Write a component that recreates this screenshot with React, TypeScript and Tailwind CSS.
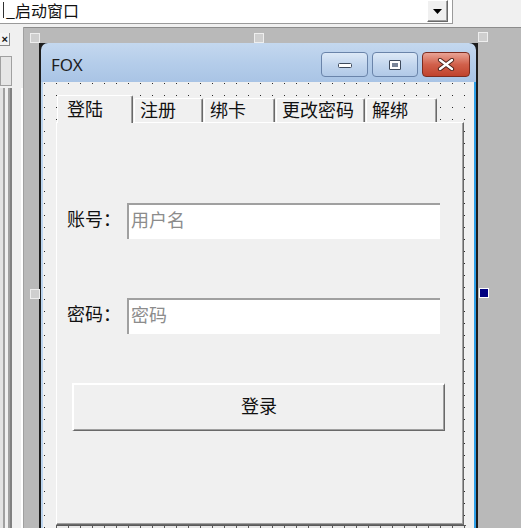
import React from "react";

const tabs = [
  { label: "注册", w: "w-[69px]" },
  { label: "绑卡", w: "w-[71px]" },
  { label: "更改密码", w: "w-[89px]" },
  { label: "解绑", w: "w-[71px]" },
];

function TopBar() {
  return (
    <div className="h-[27px] flex shrink-0 bg-[#f0f0f0]">
      <div className="w-[453px] h-[24px] bg-white border-r border-b border-[#9a9a9a] flex items-start">
        <div className="h-[23px] pt-[1px] flex items-start">
          <span className="ml-[3px] mt-[1px] w-px h-[16px] bg-[#303030]" />
          <span className="ml-[2px] text-[16px] leading-[18px] text-[#111]">_启动窗口</span>
        </div>
        <div className="ml-auto mr-[4px] w-[21px] h-[22px] bg-[#f0f0f0] border-t border-l border-t-white border-l-white border-r border-b border-r-[#696969] border-b-[#696969] shadow-[inset_-1px_-1px_0_#a0a0a0] flex items-center justify-center">
          <svg width="9" height="5" viewBox="0 0 9 5">
            <path d="M0 0h9L4.5 5z" fill="#000" />
          </svg>
        </div>
      </div>
    </div>
  );
}

function LeftDock() {
  return (
    <div className="w-[24px] shrink-0 flex flex-col bg-[#f0f0f0] border-r border-[#a0a0a0]">
      <div className="h-[61px] shrink-0 bg-[#f0f0f0]">
        <div className="mt-[6px] w-[10px] h-[13px] bg-[#f4f4f4] border-r border-b border-[#8a8a8a] flex items-center justify-end pr-[1px]">
          <span className="text-[11px] leading-none font-bold font-['Liberation_Sans',sans-serif]">×</span>
        </div>
        <div className="mt-[10px] w-[12px] h-[30px] border border-[#a0a0a0] bg-[#e6e6e6]" />
      </div>
      <div className="flex-1 bg-[linear-gradient(to_right,#e3e3e3_0_3px,#a0a0a0_3px_5px,#f0f0f0_5px_8px,#a0a0a0_8px_10px,#808080_10px_12px,#f0f0f0_12px_21px,#ffffff_21px_23px)]" />
    </div>
  );
}

function Handles() {
  const light = "absolute w-[10px] h-[10px] bg-[#cfcfcf] border border-[#eeeeee]";
  return (
    <>
      <div className={`${light} left-[6px] top-[5px]`} />
      <div className={`${light} left-[230px] top-[5px]`} />
      <div className={`${light} left-[454px] top-[4px]`} />
      <div className={`${light} left-[6px] top-[261px]`} />
      <div className="absolute w-[10px] h-[10px] bg-[#000080] border border-white left-[455px] top-[260px]" />
    </>
  );
}

function CaptionButton({ kind, w }: { kind: "min" | "max" | "close"; w: string }) {
  const close = kind === "close";
  return (
    <div
      className={`${w} h-[25px] rounded-[4px] border flex items-center justify-center ${
        close
          ? "border-[#7c2c20] bg-[linear-gradient(to_bottom,#e9a395,#d1604b_50%,#c0432d)]"
          : "border-[#6a84aa] bg-[linear-gradient(to_bottom,#dde9f7,#c3d6ee_50%,#b1c9e7)]"
      }`}
    >
      {kind === "min" && (
        <svg width="16" height="8" viewBox="0 0 16 8">
          <rect x="1.5" y="2.5" width="13" height="4" rx="1" fill="#fff" stroke="#3e4a5c" />
        </svg>
      )}
      {kind === "max" && (
        <svg width="14" height="12" viewBox="0 0 14 12">
          <rect x="1.5" y="1.5" width="11" height="9" rx="0.5" fill="#7a8598" stroke="#3e4a5c" />
          <rect x="3" y="3" width="8" height="6" fill="none" stroke="#fff" strokeWidth="2" />
        </svg>
      )}
      {close && (
        <svg width="18" height="13" viewBox="0 0 18 13">
          <path d="M3 2l12 9M15 2L3 11" stroke="#4a2018" strokeWidth="4.2" strokeLinecap="round" />
          <path d="M3 2l12 9M15 2L3 11" stroke="#fff" strokeWidth="2.4" strokeLinecap="round" />
        </svg>
      )}
    </div>
  );
}

function LoginPanel() {
  return (
    <div className="-ml-px w-[408px] h-[403px] shrink-0 bg-[#f0f0f0] border-t border-l border-white border-r border-b border-r-[#696969] border-b-[#696969] shadow-[inset_-1px_-1px_0_#a0a0a0] pl-[10px] flex flex-col">
      <div className="mt-[80px] flex items-center h-[36px]">
        <span className="w-[60px] h-[36px] flex items-center pb-[7px] text-[18px] leading-none">账号：</span>
        <input
          placeholder="用户名"
          className="w-[313px] h-[36px] bg-white border-t-2 border-l-2 border-t-[#a0a0a0] border-l-[#a0a0a0] pl-[2px] pb-[6px] text-[18px] outline-none placeholder:text-[#8c8c8c]"
        />
      </div>
      <div className="mt-[59px] flex items-center h-[36px]">
        <span className="w-[60px] h-[36px] flex items-center pb-[7px] text-[18px] leading-none">密码：</span>
        <input
          placeholder="密码"
          className="w-[313px] h-[36px] bg-white border-t-2 border-l-2 border-t-[#a0a0a0] border-l-[#a0a0a0] pl-[2px] pb-[6px] text-[18px] outline-none placeholder:text-[#8c8c8c]"
        />
      </div>
      <button className="mt-[49px] ml-[5px] w-[373px] h-[48px] bg-[#f0f0f0] border-t-2 border-l-2 border-t-white border-l-white border-r border-b border-r-[#696969] border-b-[#696969] shadow-[inset_-1px_-1px_0_#a0a0a0] pb-[6px] text-[18px] leading-none">
        登录
      </button>
    </div>
  );
}

function FormWindow() {
  return (
    <div className="w-[439px] h-[500px] bg-[#1c1c1c] border-l-2 border-r-2 border-[#1c1c1c] flex flex-col">
      <div className="h-[39px] shrink-0 rounded-t-[7px] bg-[linear-gradient(to_bottom,#c4d8ef,#b5cdea_50%,#a9c4e5)] flex items-start pl-[10px] pr-[6px]">
        <span className="mt-[13px] text-[17px] leading-none text-[#1e1e1e] font-['Noto_Sans',sans-serif]">FOX</span>
        <div className="ml-auto mt-[9px] flex gap-[4px]">
          <CaptionButton kind="min" w="w-[47px]" />
          <CaptionButton kind="max" w="w-[46px]" />
          <CaptionButton kind="close" w="w-[48px]" />
        </div>
      </div>
      <div className="flex flex-1 min-h-0">
        <div className="w-[2px] bg-[#bcd5ef]" />
        <div className="flex-1 bg-[#f0f0f0] bg-[radial-gradient(circle_at_1.5px_1.5px,#2a2a2a_1px,transparent_1px)] bg-size-[12px_12px] pt-[13px] pl-[14px] flex flex-col">
          <div className="h-[27px] flex items-end gap-[1px]">
            <div className="relative z-10 -mb-px w-[76px] h-[28px] bg-[#f0f0f0] rounded-t-[2px] border-t border-l border-white border-r border-r-[#696969] shadow-[inset_-1px_0_0_#a0a0a0] pl-[9px] pt-[3px] text-[18px] leading-none">
              登陆
            </div>
            {tabs.map((t) => (
              <div
                key={t.label}
                className={`${t.w} h-[24px] bg-[#f0f0f0] rounded-t-[2px] border-t border-l border-white border-r border-r-[#696969] shadow-[inset_-1px_0_0_#a0a0a0] pl-[5px] pt-[1px] text-[18px] leading-none`}
              >
                {t.label}
              </div>
            ))}
          </div>
          <LoginPanel />
          <div className="-ml-px w-[410px] h-[6px] border-t border-[#5a5a5a] bg-[repeating-linear-gradient(to_right,#5a5a5a_0_1px,#e8e8e8_1px_12px)]" />
        </div>
        <div className="w-[2px] bg-[#2e9fe6]" />
      </div>
    </div>
  );
}

export default function App() {
  return (
    <div className="w-[521px] h-[528px] overflow-hidden bg-[#f0f0f0] flex flex-col text-[#111] font-['Noto_Sans_CJK_SC',sans-serif]">
      <TopBar />
      <div className="flex flex-1 min-h-0">
        <LeftDock />
        <div className="relative flex-1 bg-[#b9b9b9] border-t border-[#8c8c8c] pl-[15px] pt-[15px] overflow-hidden">
          <Handles />
          <FormWindow />
        </div>
      </div>
    </div>
  );
}
